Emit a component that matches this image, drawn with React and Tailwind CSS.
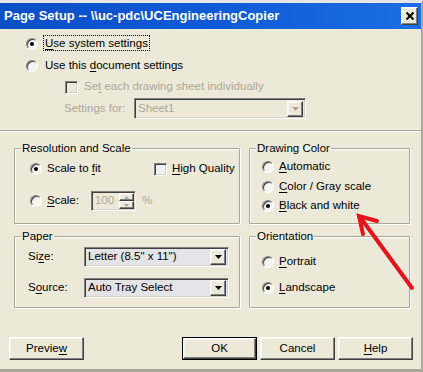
import React from 'react'

const raised =
  'border border-t-white border-l-white border-r-[#404040] border-b-[#404040] shadow-[inset_-1px_-1px_0_#808080,inset_1px_1px_0_#f4f3ee]'
const sunken =
  'border border-t-[#808080] border-l-[#808080] border-r-white border-b-white shadow-[inset_1px_1px_0_#404040,inset_-1px_-1px_0_#d4d0c8]'

function U({ children }) {
  return <span className="underline underline-offset-[2px]">{children}</span>
}

function Radio({ checked, children, className = '' }) {
  return (
    <div className={`flex items-center whitespace-nowrap ${className}`}>
      <span className="w-[12px] h-[12px] rounded-full border border-t-[#808080] border-l-[#808080] border-r-white border-b-white bg-[#f4f4f2] shadow-[inset_1px_1px_0_#404040] flex items-center justify-center shrink-0">
        {checked && <span className="w-[4px] h-[4px] rounded-full bg-black" />}
      </span>
      <span className="ml-[5px]">{children}</span>
    </div>
  )
}

function Check({ disabled }) {
  return (
    <span
      className={`w-[13px] h-[13px] shrink-0 ${sunken} ${disabled ? 'bg-[#ece9d8]' : 'bg-[#f0f0f0]'}`}
    />
  )
}

function DropArrow({ disabled }) {
  return (
    <span className={`w-[16px] h-[16px] bg-[#ece9d8] flex items-center justify-center ${raised}`}>
      <svg width="7" height="4" viewBox="0 0 7 4">
        <path d="M0 0h7L3.5 4z" fill={disabled ? '#aca899' : '#000'} />
      </svg>
    </span>
  )
}

function Select({ value, className = '', disabled }) {
  return (
    <div
      className={`h-[20px] flex items-center justify-between pl-[3px] pr-[2px] ${sunken} ${
        disabled ? 'bg-[#ece9d8] text-[#aca899]' : 'bg-[#e4e4e6]'
      } ${className}`}
    >
      <span className="whitespace-nowrap">{value}</span>
      <DropArrow disabled={disabled} />
    </div>
  )
}

function Group({ title, className = '', children }) {
  return (
    <fieldset
      className={`border border-[#aca899] shadow-[inset_1px_1px_0_#fff,1px_1px_0_#fff] rounded-[1px] ${className}`}
    >
      <legend className="ml-[6px] px-[1px] leading-[13px]">{title}</legend>
      {children}
    </fieldset>
  )
}

function Button({ children, isDefault, className = '' }) {
  return (
    <div className={`${isDefault ? 'border border-black' : ''} ${className}`}>
      <div className={`h-full flex items-center justify-center bg-[#ece9d8] ${raised}`}>{children}</div>
    </div>
  )
}

export default function App() {
  return (
    <div className="w-[423px] h-[372px] bg-[#ece9d8] relative overflow-hidden flex flex-col font-['Liberation_Sans',Arial,sans-serif] text-[11.5px] text-black border-t-[3px] border-t-[#e6e6e6] border-r-[2px] border-r-[#aca899] border-b-[3px] border-b-[#aca899]">
      {/* Title bar */}
      <div className="h-[26px] shrink-0 flex items-center justify-between pl-[4px] pr-[3px] bg-gradient-to-r from-[#0a4fc6] via-[#0e5ad6] to-[#1c6ee2]">
        <span className="text-white font-bold text-[13px] whitespace-nowrap">
          Page Setup -- \\uc-pdc\UCEngineeringCopier
        </span>
        <span className={`w-[17px] h-[18px] flex items-center justify-center bg-[#ece9d8] ${raised}`}>
          <svg width="8" height="8" viewBox="0 0 8 8">
            <path d="M0.5 0.5l7 7M7.5 0.5l-7 7" stroke="#000" strokeWidth="2" />
          </svg>
        </span>
      </div>

      {/* Settings source */}
      <div className="pl-[26px] pt-[4px]">
        <Radio checked className="h-[22px]">
          <span className="border border-dotted border-black px-[1px] py-[1px]">
            <U>U</U>se system settings
          </span>
        </Radio>
        <Radio className="h-[22px]">
          <span className="px-[2px]">
            Use this <U>d</U>ocument settings
          </span>
        </Radio>
        <div className="h-[20px] flex items-center pl-[39px] text-[#aca899]">
          <Check disabled />
          <span className="ml-[6px]">
            Se<U>t</U> each drawing sheet individually
          </span>
        </div>
        <div className="mt-[1px] h-[21px] flex items-center pl-[38px] text-[#aca899]">
          <span className="w-[70px]">Settings for:</span>
          <Select value="Sheet1" disabled className="w-[172px] h-[21px]" />
        </div>
      </div>

      <div className="mt-[11px] h-[2px] border-t border-t-[#aca899] border-b border-b-white" />

      {/* Groups */}
      <div className="mt-[10px] ml-[14px] grid grid-cols-[226px_161px] grid-rows-[82px_78px] gap-x-[9px] gap-y-[6px]">
        <Group title="Resolution and Scale">
          <div className="pl-[15px]">
            <div className="mt-[4px] h-[20px] flex items-center">
              <Radio checked className="w-[124px]">
                Scale to <U>f</U>it
              </Radio>
              <div className="flex items-center whitespace-nowrap">
                <Check />
                <span className="ml-[5px]">
                  <U>H</U>igh Quality
                </span>
              </div>
            </div>
            <div className="mt-[12px] h-[20px] flex items-center">
              <Radio>
                <U>S</U>cale:
              </Radio>
              <div className={`ml-[12px] w-[45px] h-[20px] flex items-center justify-between pl-[3px] pr-[1px] ${sunken}`}>
                <span className="text-[#aca899]">100</span>
                <div className="flex flex-col w-[15px]">
                  <span className={`h-[8px] bg-[#ece9d8] flex items-center justify-center ${raised}`}>
                    <svg width="5" height="3" viewBox="0 0 5 3">
                      <path d="M0 3h5L2.5 0z" fill="#aca899" />
                    </svg>
                  </span>
                  <span className={`h-[8px] bg-[#ece9d8] flex items-center justify-center ${raised}`}>
                    <svg width="5" height="3" viewBox="0 0 5 3">
                      <path d="M0 0h5L2.5 3z" fill="#aca899" />
                    </svg>
                  </span>
                </div>
              </div>
              <span className="ml-[6px] text-[#aca899]">%</span>
            </div>
          </div>
        </Group>

        <Group title="Drawing Color">
          <div className="pl-[12px]">
            <Radio className="mt-[2px] h-[20px]">
              <U>A</U>utomatic
            </Radio>
            <Radio className="h-[20px]">
              <U>C</U>olor / Gray scale
            </Radio>
            <Radio checked className="h-[17px]">
              <U>B</U>lack and white
            </Radio>
          </div>
        </Group>

        <Group title="Paper">
          <div className="pl-[13px] pr-[10px]">
            <div className="mt-[4px] h-[20px] flex items-center">
              <span className="w-[56px]">
                Si<U>z</U>e:
              </span>
              <Select value={'Letter (8.5" x 11")'} className="w-[145px]" />
            </div>
            <div className="mt-[11px] h-[20px] flex items-center">
              <span className="w-[56px]">
                S<U>o</U>urce:
              </span>
              <Select value="Auto Tray Select" className="w-[145px]" />
            </div>
          </div>
        </Group>

        <Group title="Orientation">
          <div className="pl-[12px]">
            <Radio className="mt-[9px] h-[20px]">
              <U>P</U>ortrait
            </Radio>
            <Radio checked className="mt-[6px] h-[20px]">
              <U>L</U>andscape
            </Radio>
          </div>
        </Group>
      </div>

      {/* Buttons */}
      <div className="mt-[29px] flex justify-between pl-[9px] pr-[8px]">
        <Button className="w-[75px] h-[23px]">
          <span>
            Previe<U>w</U>
          </span>
        </Button>
        <div className="flex gap-[3px]">
          <Button isDefault className="w-[75px] h-[23px]">
            OK
          </Button>
          <Button className="w-[75px] h-[23px]">Cancel</Button>
          <Button className="w-[75px] h-[23px]">
            <span>
              <U>H</U>elp
            </span>
          </Button>
        </div>
      </div>

      {/* Annotation arrow */}
      <svg
        className="absolute left-0 top-0 pointer-events-none"
        width="423"
        height="372"
        viewBox="0 0 423 372"
      >
        <g stroke="#e3141b" strokeWidth="4" strokeLinecap="round" fill="none">
          <path d="M412 285L360 214" />
          <path d="M363 231L359 213L377 218" />
        </g>
      </svg>
    </div>
  )
}
